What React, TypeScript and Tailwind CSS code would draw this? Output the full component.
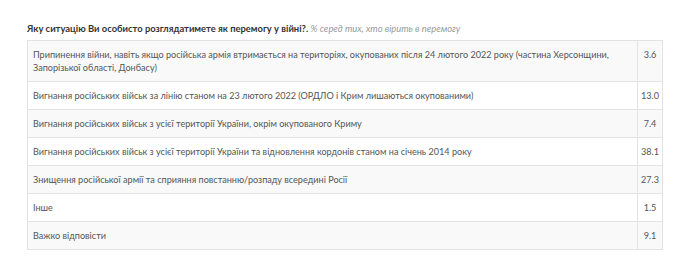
import React from 'react';

type Row = { label: string; value: string };

const rows: Row[] = [
    {
        label: 'Припинення війни, навіть якщо російська армія втримається на територіях, окупованих після 24 лютого 2022 року (частина Херсонщини, Запорізької області, Донбасу)',
        value: '3.6',
    },
    { label: 'Вигнання російських військ за лінію станом на 23 лютого 2022 (ОРДЛО і Крим лишаються окупованими)', value: '13.0' },
    { label: 'Вигнання російських військ з усієї території України, окрім окупованого Криму', value: '7.4' },
    { label: 'Вигнання російських військ з усієї території України та відновлення кордонів станом на січень 2014 року', value: '38.1' },
    { label: 'Знищення російської армії та сприяння повстанню/розпаду всередині Росії', value: '27.3' },
    { label: 'Інше', value: '1.5' },
    { label: 'Важко відповісти', value: '9.1' },
];

const App: React.FC = () => {
    return (
        <div className="w-[690px] h-[274px] bg-white px-[27px] pt-[22px] font-['Lato','Open_Sans',sans-serif] text-[#555]">
            {/* Question heading */}
            <p className="text-[9.4px] leading-[13px] text-[#333]">
                <span className="font-bold">Яку ситуацію Ви особисто розглядатимете як перемогу у війні?.</span>{' '}
                <span className="italic text-[#999]">% серед тих, хто вірить в перемогу</span>
            </p>

            <table className="mt-[5px] w-[636px] border-collapse text-[9.1px] leading-[13px]">
                <tbody>
                    {rows.map((row, i) => (
                        <tr key={i} className={i % 2 === 0 ? 'bg-[#f9f9f9]' : 'bg-white'}>
                            <td className="border border-[#e3e3e3] px-[5px] pt-[7px] pb-[7px] align-top">{row.label}</td>
                            <td className="w-[25px] border border-[#e3e3e3] pt-[7px] pb-[7px] text-center align-top">{row.value}</td>
                        </tr>
                    ))}
                </tbody>
            </table>
        </div>
    );
};

export default App;
